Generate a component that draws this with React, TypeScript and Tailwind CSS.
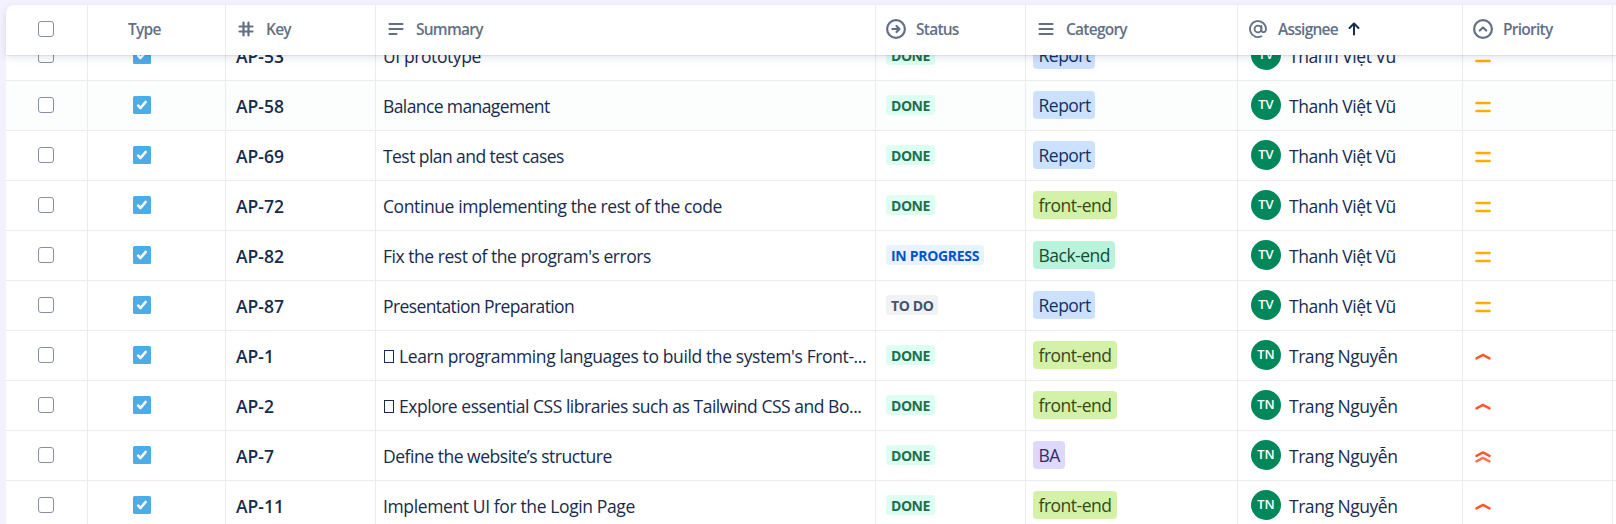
import { ReactNode } from "react";

type Status = "DONE" | "IN PROGRESS" | "TO DO";
type Priority = "medium" | "high" | "highest";
type Category = "Report" | "front-end" | "Back-end" | "BA";
interface Row {
  key: string;
  summary: string;
  tracking: string;
  bullet?: boolean;
  highlighted?: boolean;
  status: Status;
  category: Category;
  initials: string;
  assignee: string;
  priority: Priority;
}

const TV = { initials: "TV", assignee: "Thanh Việt Vũ", priority: "medium" as Priority };
const TN = { initials: "TN", assignee: "Trang Nguyễn", priority: "high" as Priority };

const rows: Row[] = [
  { key: "AP-53", summary: "UI prototype", tracking: "tracking-[-0.42px]", status: "DONE", category: "Report", ...TV },
  { key: "AP-58", summary: "Balance management", tracking: "tracking-[-0.6px]", status: "DONE", category: "Report", highlighted: true, ...TV },
  { key: "AP-69", summary: "Test plan and test cases", tracking: "tracking-[-0.56px]", status: "DONE", category: "Report", ...TV },
  { key: "AP-72", summary: "Continue implementing the rest of the code", tracking: "tracking-[-0.4px]", status: "DONE", category: "front-end", ...TV },
  { key: "AP-82", summary: "Fix the rest of the program's errors", tracking: "tracking-[-0.47px]", status: "IN PROGRESS", category: "Back-end", ...TV },
  { key: "AP-87", summary: "Presentation Preparation", tracking: "tracking-[-0.6px]", status: "TO DO", category: "Report", ...TV },
  { key: "AP-1", summary: "Learn programming languages to build the system's Front-...", tracking: "tracking-[-0.39px]", bullet: true, status: "DONE", category: "front-end", ...TN },
  { key: "AP-2", summary: "Explore essential CSS libraries such as Tailwind CSS and Bo...", tracking: "tracking-[-0.47px]", bullet: true, status: "DONE", category: "front-end", ...TN },
  { key: "AP-7", summary: "Define the website’s structure", tracking: "tracking-[-0.47px]", status: "DONE", category: "BA", ...TN, priority: "highest" },
  { key: "AP-11", summary: "Implement UI for the Login Page", tracking: "tracking-[-0.38px]", status: "DONE", category: "front-end", ...TN },
];

const GRID = "grid grid-cols-[82px_138px_150px_500px_150px_212px_225px_150px_3px]";
const CELL = "flex items-center border-r border-[#ebecee]";

const statusStyle: Record<Status, string> = {
  DONE: "w-[49px] tracking-[-0.45px] bg-[#dcfff1] text-[#216e4e]",
  "IN PROGRESS": "w-[98px] tracking-[-0.3px] bg-[#e9f2ff] text-[#0055cc]",
  "TO DO": "w-[52px] tracking-[-0.4px] bg-[#f1f2f4] text-[#44546f]",
};

const categoryStyle: Record<Category, string> = {
  Report: "w-[62px] bg-[#cce0ff] text-[#123263]",
  "front-end": "w-[84px] bg-[#d3f1a7] text-[#37471f]",
  "Back-end": "w-[82px] bg-[#baf3db] text-[#164b35]",
  BA: "w-8 bg-[#dfd8fd] text-[#352c63]",
};

function Checkbox() {
  return <span className="size-4 rounded-[3px] border border-[#8590a2] bg-white" />;
}

function TaskIcon() {
  return (
    <svg width="18" height="18" viewBox="0 0 18 18">
      <rect width="18" height="18" rx="1.5" fill="#4bade8" />
      <path d="M5.2 9.6 7.5 12 12.6 6" fill="none" stroke="#fff" strokeWidth="2.7" strokeLinecap="round" strokeLinejoin="round" />
    </svg>
  );
}

function PriorityIcon({ level }: { level: Priority }) {
  return (
    <svg className="mt-[2px]" width="16" height="20" viewBox="0 0 16 20" fill="none" strokeWidth="2.4" strokeLinecap="round" strokeLinejoin="round">
      {level === "medium" && <path d="M1.5 7h13M1.5 15h13" stroke="#ffab00" strokeWidth="2.5" />}
      {level === "high" && <path d="M1.5 12.4 8 8.9l6.5 3.5" stroke="#ff5630" />}
      {level === "highest" && (
        <>
          <path d="M1.5 15.4 8 11.9l6.5 3.5" stroke="#ff7452" />
          <path d="M1.5 9.9 8 6.4l6.5 3.5" stroke="#ff5630" />
        </>
      )}
    </svg>
  );
}

const HEADER_TEXT = "mt-px text-[15.5px] font-semibold tracking-[-0.75px]";

function HeaderLabel({ icon, gap, children }: { icon: ReactNode; gap: string; children: ReactNode }) {
  return (
    <span className={`flex items-center ${gap}`}>
      {icon}
      <span className={HEADER_TEXT}>{children}</span>
    </span>
  );
}

const stroke = { fill: "none", stroke: "#626f86", strokeWidth: 2.2, strokeLinecap: "round" as const, strokeLinejoin: "round" as const };

function Header() {
  return (
    <header className={`${GRID} relative z-10 h-[50px] rounded-tl-lg bg-white text-[#626f86] shadow-[0_1px_1px_rgba(9,30,66,0.08),0_3px_9px_rgba(9,30,66,0.10)] *:pb-[2px]`}>
      <div className={`${CELL} pl-8`}><Checkbox /></div>
      <div className={`${CELL} pl-[40px]`}>
        <span className={HEADER_TEXT}>Type</span>
      </div>
      <div className={`${CELL} pl-3`}>
        <HeaderLabel gap="gap-3" icon={<svg width="16" height="16" viewBox="0 0 16 16" {...stroke}><path d="M5.5 1.5v13M10.5 1.5v13M1.5 5.5h13M1.5 10.5h13" /></svg>}>Key</HeaderLabel>
      </div>
      <div className={`${CELL} pl-3`}>
        <HeaderLabel gap="gap-3" icon={<svg width="16" height="16" viewBox="0 0 16 16" {...stroke}><path d="M1.5 3h13M1.5 8h13M1.5 13h7" /></svg>}>Summary</HeaderLabel>
      </div>
      <div className={`${CELL} pl-2.5`}>
        <HeaderLabel gap="gap-2.5" icon={<svg width="20" height="20" viewBox="0 0 20 20" {...stroke}><circle cx="10" cy="10" r="8.9" /><path d="M6.5 10h7M10.5 7l3 3-3 3" /></svg>}>Status</HeaderLabel>
      </div>
      <div className={`${CELL} pl-3`}>
        <HeaderLabel gap="gap-3" icon={<svg width="16" height="16" viewBox="0 0 16 16" {...stroke}><path d="M1.5 3h13M1.5 8h13M1.5 13h13" /></svg>}>Category</HeaderLabel>
      </div>
      <div className={`${CELL} pl-[11px]`}>
        <HeaderLabel gap="gap-[11px]" icon={<svg width="18" height="18" viewBox="0 0 18 18" {...stroke} strokeWidth={1.8}><circle cx="9" cy="9" r="3.4" /><path d="M12.4 5.8v4.4c0 3 4.6 2.8 4.6-1.2A8 8 0 1 0 12.5 16.3" /></svg>}>Assignee</HeaderLabel>
        <svg className="ml-2.5" width="12" height="14" viewBox="0 0 12 14" fill="none" stroke="#172b4d" strokeWidth="2" strokeLinecap="round" strokeLinejoin="round"><path d="M6 12.5V2M1.5 6 6 1.5 10.5 6" /></svg>
      </div>
      <div className={`${CELL} pl-2.5`}>
        <HeaderLabel gap="gap-2.5" icon={<svg width="20" height="20" viewBox="0 0 20 20" {...stroke}><circle cx="10" cy="10" r="8.9" /><path d="M6.8 11.5 10 8.5l3.2 3" /></svg>}>Priority</HeaderLabel>
      </div>
      <div />
    </header>
  );
}

function TableRow({ row }: { row: Row }) {
  return (
    <div className={`${GRID} h-[50px] shrink-0 border-b border-[#ebecee] ${row.highlighted ? "bg-[#fbfefd]" : "bg-white"}`}>
      <div className={`${CELL} pb-px pl-8`}><Checkbox /></div>
      <div className={`${CELL} pb-px pl-[45px]`}><TaskIcon /></div>
      <div className={`${CELL} pt-px pl-[10px] text-[17.5px] font-semibold`}>{row.key}</div>
      <div className={`${CELL} pt-px pl-[7px] text-[17.5px] whitespace-nowrap ${row.tracking}`}>
        {row.bullet && <span className="mr-[5px] ml-px h-[13px] w-[10px] shrink-0 border border-[#172b4d]" />}
        {row.summary}
      </div>
      <div className={`${CELL} pb-px pl-2.5`}>
        <span className={`flex h-5 items-center rounded-[3px] pt-px pl-[5px] text-[14px] leading-5 font-bold whitespace-nowrap ${statusStyle[row.status]}`}>{row.status}</span>
      </div>
      <div className={`${CELL} pb-px pl-[7px]`}>
        <span className={`flex h-7 items-center rounded pl-[5.5px] text-[17.5px] leading-7 tracking-[-0.5px] whitespace-nowrap ${categoryStyle[row.category]}`}>{row.category}</span>
      </div>
      <div className={`${CELL} gap-2 pb-px pl-[13px]`}>
        <span className="flex size-[30px] items-center justify-center rounded-full bg-[#00875a] text-[13px] font-semibold text-white">{row.initials}</span>
        <span className="pt-[2px] text-[17.5px] tracking-[-0.46px] whitespace-nowrap">{row.assignee}</span>
      </div>
      <div className={`${CELL} pb-px pl-3`}><PriorityIcon level={row.priority} /></div>
      <div />
    </div>
  );
}

export default function App() {
  return (
    <main className="h-[524px] w-[1616px] overflow-hidden bg-[#f3f0ff] pt-[5px] pl-1.5 font-['Open_Sans',sans-serif] text-[#172b4d]">
      <Header />
      <section className="-mt-6 flex flex-col">
        {rows.map((row) => (
          <TableRow key={row.key} row={row} />
        ))}
      </section>
    </main>
  );
}
